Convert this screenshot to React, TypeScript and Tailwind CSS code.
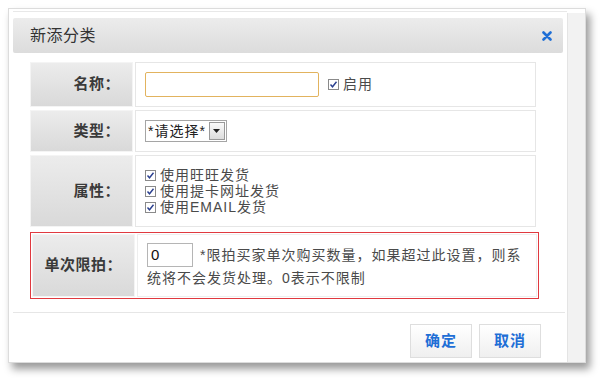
import { useState } from 'react';

const font = 'font-["Liberation_Sans","Noto_Sans_CJK_SC",sans-serif]';

function Label({ text }: { text: string }) {
  return (
    <div className="w-[103px] shrink-0 flex items-center justify-end pr-[12px] bg-gradient-to-b from-[#ececec] to-[#d9d9d9] border border-[#f4f4f4] text-[15px] tracking-[0.5px] font-bold text-[#3a3a3a]">
      {text}
    </div>
  );
}

function Check({ label }: { label: string }) {
  return (
    <label className="flex items-center gap-[4px] h-[16px]">
      <span className="w-[11px] h-[11px] border border-[#8a8a8a] bg-white flex items-center justify-center">
        <svg width="9" height="9" viewBox="0 0 9 9">
          <path d="M1.5 4.5 L3.5 6.8 L7.5 1.8" fill="none" stroke="#2a3f8f" strokeWidth="1.4" />
        </svg>
      </span>
      <span>{label}</span>
    </label>
  );
}

export default function App() {
  const [name, setName] = useState('');
  const [limit, setLimit] = useState('0');

  return (
    <div className={`w-[600px] h-[378px] bg-white pl-[8px] pt-[8px] text-[14px] tracking-[1px] text-[#4a4a4a] ${font}`}>
      <div className="w-[578px] h-[355px] flex bg-white border border-[#dcdcdc] shadow-[4px_6px_8px_rgba(0,0,0,0.4)]">
        {/* main */}
        <div className="w-[558px] pl-[4px] pt-[2px] flex flex-col">
          <div className="h-[7px] border-t border-[#e8e8e8]" />
          {/* header */}
          <div className="w-[550px] h-[35px] flex items-center justify-between px-[17px] rounded-[2px] bg-gradient-to-b from-[#ececec] to-[#dcdcdc]">
            <span className="text-[16px] tracking-[0.5px] text-[#333]">新添分类</span>
            <svg width="10" height="10" viewBox="0 0 10 10" className="mr-[-6px]">
              <path d="M1.5 1.5 L8.5 8.5 M8.5 1.5 L1.5 8.5" stroke="#1f6fd6" strokeWidth="2.6" strokeLinecap="round" />
            </svg>
          </div>

          {/* form */}
          <div className="ml-[17px] mt-[9px] w-[509px] flex flex-col">
            <div className="flex h-[45px] gap-[2px] pr-[3px]">
              <Label text="名称：" />
              <div className="flex-1 flex items-center pl-[9px] border border-[#e6e6e6]">
                <input
                  value={name}
                  onChange={(e) => setName(e.target.value)}
                  className="w-[174px] h-[25px] border border-[#e2b35e] rounded-[2px] outline-none px-1"
                />
                <span className="ml-[9px]">
                  <Check label="启用" />
                </span>
              </div>
            </div>

            <div className="flex h-[42px] gap-[2px] pr-[3px] mt-[3px]">
              <Label text="类型：" />
              <div className="flex-1 flex items-center pl-[9px] border border-[#e6e6e6]">
                <div className="flex items-center h-[22px] border border-[#a5a5a5] bg-white">
                  <span className="pl-[2px] pr-[3px] text-[#222]">*请选择*</span>
                  <span className="w-[16px] h-[18px] mr-[1px] border border-[#999] bg-gradient-to-b from-[#fafafa] to-[#dcdcdc] flex items-center justify-center">
                    <svg width="7" height="4" viewBox="0 0 7 4">
                      <path d="M0 0 H7 L3.5 4 Z" fill="#222" />
                    </svg>
                  </span>
                </div>
              </div>
            </div>

            <div className="flex h-[72px] gap-[2px] pr-[3px] mt-[3px]">
              <Label text="属性：" />
              <div className="flex-1 flex flex-col justify-center pl-[9px] border border-[#e6e6e6]">
                <Check label="使用旺旺发货" />
                <Check label="使用提卡网址发货" />
                <Check label="使用EMAIL发货" />
              </div>
            </div>

            <div className="flex h-[67px] gap-[2px] mt-[5px] border border-[#e0393f] p-[1px]">
              <Label text="单次限拍：" />
              <div className="flex-1 flex items-center pl-[9px] pr-[4px] bg-white border border-[#eeeeee]">
                <div className="leading-[22px]">
                  <input
                    value={limit}
                    onChange={(e) => setLimit(e.target.value)}
                    className="w-[46px] h-[24px] border border-[#b5b5b5] outline-none px-[3px] text-[15px] text-[#111] align-middle"
                  />
                  <span className="ml-[7px] align-middle">*限拍买家单次购买数量，如果超过此设置，则系</span>
                  <br />
                  <span>统将不会发货处理。0表示不限制</span>
                </div>
              </div>
            </div>
          </div>

          {/* footer */}
          <div className="mt-[13px] w-[552px] border-t border-[#e6e6e6] flex justify-end gap-[7px] pt-[11px] pr-[24px]">
            <button className="w-[62px] h-[34px] border border-[#dedede] bg-gradient-to-b from-white to-[#efefef] text-[15px] tracking-[1px] font-bold text-[#1f6fd6]">
              确定
            </button>
            <button className="w-[62px] h-[34px] border border-[#dedede] bg-gradient-to-b from-white to-[#efefef] text-[15px] tracking-[1px] font-bold text-[#1f6fd6]">
              取消
            </button>
          </div>
        </div>

        {/* side strip */}
        <div className="flex-1 bg-[#f2f2f2] border-l border-[#e4e4e4] mt-[4px]" />
      </div>
    </div>
  );
}
